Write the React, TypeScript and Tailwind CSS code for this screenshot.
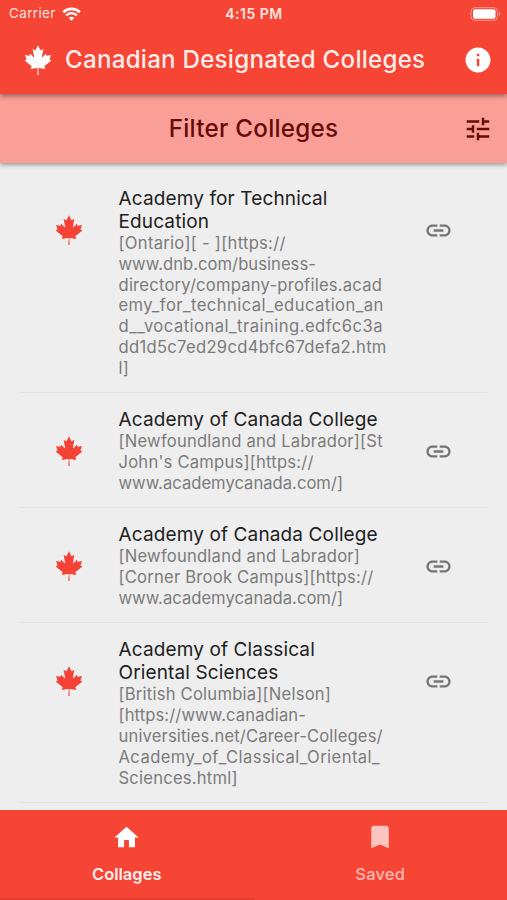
import { clsx } from "clsx";
import { MdBookmark, MdHome, MdInfo, MdLink, MdTune } from "react-icons/md";

type Line = {
  text: string;
  tracking?: string;
};

type College = {
  id: number;
  name: string[];
  details: Line[];
};

const colleges: College[] = [
  {
    id: 1,
    name: ["Academy for Technical", "Education"],
    details: [
      { text: "[Ontario][ - ][https://", tracking: "tracking-[0.28px]" },
      { text: "www.dnb.com/business-", tracking: "tracking-[0.04px]" },
      { text: "directory/company-profiles.acad" },
      { text: "emy_for_technical_education_an", tracking: "tracking-[0.44px]" },
      { text: "d__vocational_training.edfc6c3a", tracking: "tracking-[0.47px]" },
      { text: "dd1d5c7ed29cd4bfc67defa2.htm", tracking: "tracking-[0.3px]" },
      { text: "l]" },
    ],
  },
  {
    id: 2,
    name: ["Academy of Canada College"],
    details: [
      { text: "[Newfoundland and Labrador][St" },
      { text: "John's Campus][https://" },
      { text: "www.academycanada.com/]", tracking: "tracking-[0.02px]" },
    ],
  },
  {
    id: 3,
    name: ["Academy of Canada College"],
    details: [
      { text: "[Newfoundland and Labrador]" },
      { text: "[Corner Brook Campus][https://" },
      { text: "www.academycanada.com/]", tracking: "tracking-[0.02px]" },
    ],
  },
  {
    id: 4,
    name: ["Academy of Classical", "Oriental Sciences"],
    details: [
      { text: "[British Columbia][Nelson]" },
      { text: "[https://www.canadian-", tracking: "tracking-[0.1px]" },
      { text: "universities.net/Career-Colleges/", tracking: "tracking-[0.15px]" },
      { text: "Academy_of_Classical_Oriental_", tracking: "tracking-[0.42px]" },
      { text: "Sciences.html]" },
    ],
  },
];

function MapleLeaf() {
  return (
    <svg width="28" height="30" viewBox="-1950 -2030 3900 4060" preserveAspectRatio="none" fill="currentColor">
      <path d="m-90 2030 45-863a95 95 0 0 0-111-98l-859 151 116-320a65 65 0 0 0-20-73l-941-762 212-99a65 65 0 0 0 34-79l-186-572 542 115a65 65 0 0 0 73-38l105-247 423 454a65 65 0 0 0 111-57l-204-1052 327 189a65 65 0 0 0 91-27l332-652 332 652a65 65 0 0 0 91 27l327-189-204 1052a65 65 0 0 0 111 57l423-454 105 247a65 65 0 0 0 73 38l542-115-186 572a65 65 0 0 0 34 79l212 99-941 762a65 65 0 0 0-20 73l116 320-859-151a95 95 0 0 0-111 98l45 863z" />
    </svg>
  );
}

function StatusBar() {
  return (
    <div className="grid h-[27px] grid-cols-3 items-center pl-[9px] pr-[6px] text-[13.5px] leading-none text-[#ffe4e0]">
      <div className="flex items-center gap-[6px]">
        <span className="tracking-[0.35px]">Carrier</span>
        <svg width="19" height="14" viewBox="0 0 19 14" fill="none">
          <path d="M1.2 5.2C5.8.7 13.2.7 17.8 5.2" stroke="#fff" strokeWidth="2.6" />
          <path d="M4.2 8.3c3-2.9 7.6-2.9 10.6 0" stroke="#fff" strokeWidth="2.4" />
          <path d="M6.8 10.9c1.5-1.5 3.9-1.5 5.4 0l-2.7 2.8z" fill="#fff" />
        </svg>
      </div>
      <span className="pr-[2px] text-center text-[14px] font-semibold tracking-[0.5px]">4:15 PM</span>
      <svg className="justify-self-end" width="31" height="14" viewBox="0 0 31 14" fill="none">
        <rect x="1" y="0.7" width="26.5" height="12.6" rx="3.8" stroke="#fff" strokeOpacity="0.45" />
        <rect x="3" y="2.2" width="22.5" height="9.6" rx="2" fill="#fff" />
        <path d="M29 4.8v4.4c1.6-.6 1.6-3.8 0-4.4z" fill="#fff" fillOpacity="0.5" />
      </svg>
    </div>
  );
}

function CollegeRow({ college }: { college: College }) {
  return (
    <li className="flex items-start border-b border-[#e2e2e2] pt-[14.6px] pb-[13.8px]">
      <div className="flex w-[98.5px] shrink-0 pt-[28.4px] pl-[35px] text-[#f44336]">
        <MapleLeaf />
      </div>
      <div className="w-[300px] shrink-0 whitespace-pre">
        <div className="text-[19px] leading-[23.2px] tracking-[0.13px] text-[#212121]">
          {college.name.map((line) => (
            <div key={line}>{line}</div>
          ))}
        </div>
        <div className="text-[16.6px] leading-[20.8px] text-[#7b7b7b]">
          {college.details.map((line) => (
            <div key={line.text} className={clsx(line.tracking ?? "tracking-[0.22px]")}>
              {line.text}
            </div>
          ))}
        </div>
      </div>
      <button className="mt-[29px] ml-[5px] text-[#757575]">
        <MdLink size={29} />
      </button>
    </li>
  );
}

function App() {
  return (
    <div className="flex h-[900px] w-[507px] flex-col overflow-hidden bg-[#eeeeee] font-['Inter','Liberation_Sans',sans-serif]">
      <header className="relative z-20 h-[94px] shrink-0 bg-[#f64435] shadow-[0_2px_5px_rgba(0,0,0,0.4)]">
        <StatusBar />
        <div className="flex h-[66px] items-center pr-[14px] pl-[24px] text-white">
          <MapleLeaf />
          <h1 className="ml-[13px] text-[24.2px] font-medium tracking-[0.22px] whitespace-nowrap text-[#ffece9]">
            Canadian Designated Colleges
          </h1>
          <MdInfo size={30} className="ml-auto" />
        </div>
      </header>
      <div className="relative z-10 flex h-[69px] shrink-0 items-center justify-center bg-[#f99f98] text-[#670b08] shadow-[0_2px_4px_rgba(0,0,0,0.35)]">
        <span className="pt-px text-[24.2px] font-[450] tracking-[0.25px]">Filter Colleges</span>
        <MdTune size={30} className="absolute right-[14px]" />
      </div>
      <ul className="min-h-0 flex-1 overflow-hidden px-[20px] pt-[9px]">
        {colleges.map((college) => (
          <CollegeRow key={college.id} college={college} />
        ))}
      </ul>
      <nav className="grid h-[90px] shrink-0 grid-cols-2 bg-[#f64435] text-[16.5px] font-medium">
        <button className="flex flex-col items-center border-b-2 border-[#e93b31] pt-[13px] text-[#fff0ee]">
          <MdHome size={29} className="text-white" />
          <span className="mt-[10px] font-semibold">Collages</span>
        </button>
        <button className="flex flex-col items-center pt-[12px] text-[#fbb9b3]">
          <MdBookmark size={30} className="text-[#fcc4bf]" />
          <span className="mt-[10px] tracking-[0.2px]">Saved</span>
        </button>
      </nav>
    </div>
  );
}

export default App;
